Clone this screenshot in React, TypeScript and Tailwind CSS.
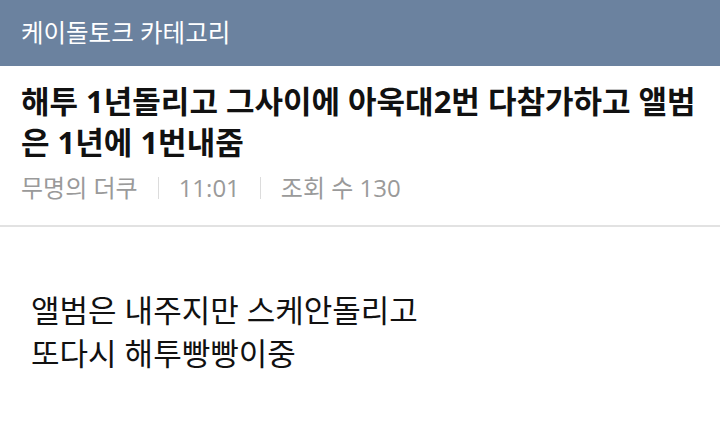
export default function App() {
  const font = { fontFamily: '"Open Sans", "Noto Sans CJK KR", sans-serif' };

  return (
    <div className="min-h-screen bg-white" style={font}>
      <header className="flex h-[66px] items-center bg-[#6b829f] px-[21px]">
        <h1 className="text-[24.5px] text-white">케이돌토크 카테고리</h1>
      </header>

      <section className="border-b-2 border-[#e2e2e2] px-[21px] pt-[15px] pb-[20px]">
        <h2 className="break-all text-[31px] font-bold leading-[41px] text-[#111]">
          해투 1년돌리고 그사이에 아욱대2번 다참가하고 앨범은 1년에 1번내줌
        </h2>
        <div className="mt-[8px] flex items-center text-[24px] leading-[34px] text-[#9a9a9a]">
          <span>무명의 더쿠</span>
          <span className="mx-[20px] h-[22px] w-px bg-[#dcdcdc]" />
          <span>11:01</span>
          <span className="mx-[20px] h-[22px] w-px bg-[#dcdcdc]" />
          <span>조회 수 130</span>
        </div>
      </section>

      <article className="px-[31px] pt-[62px] text-[31px] leading-[43px] text-[#111]">
        <p>앨범은 내주지만 스케안돌리고</p>
        <p>또다시 해투빵빵이중</p>
      </article>
    </div>
  );
}
